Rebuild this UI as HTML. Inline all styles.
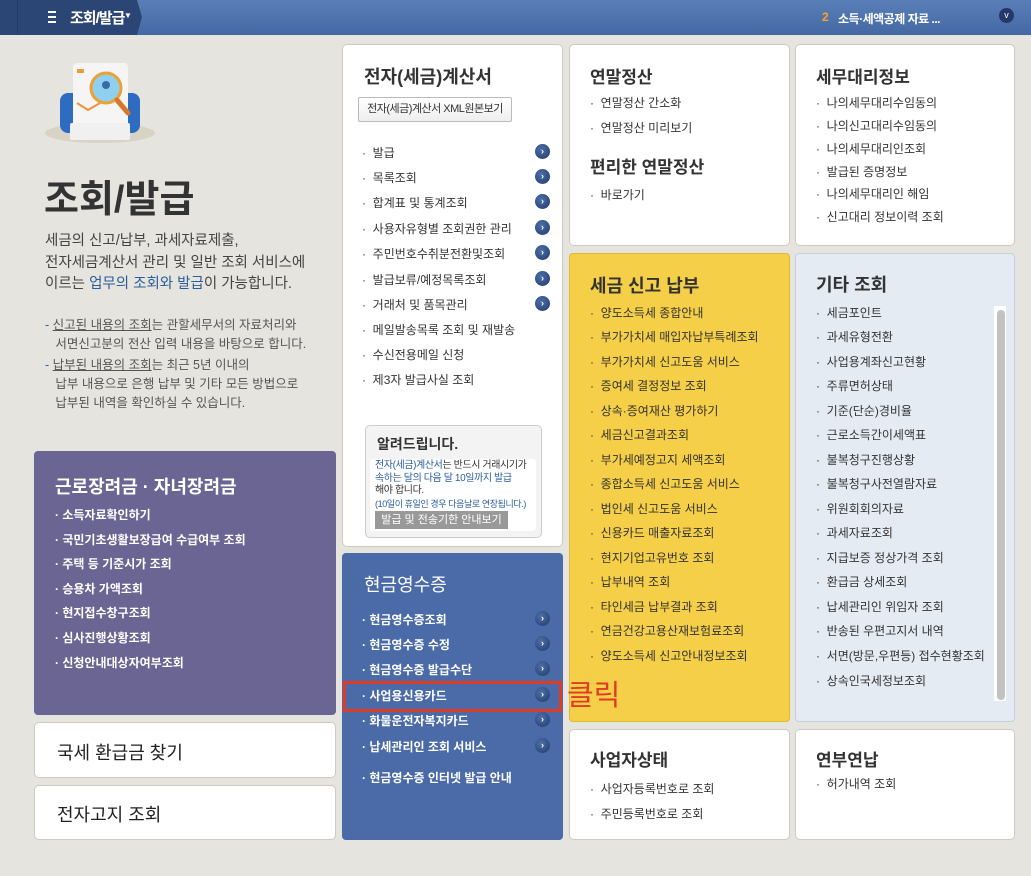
<!DOCTYPE html>
<html><head><meta charset="utf-8"><style>
*{margin:0;padding:0;box-sizing:border-box}
body{width:1031px;height:876px;background:#e6e4df;font-family:"Liberation Sans","Noto Sans CJK KR",sans-serif;position:relative;overflow:hidden;color:#333}
.a{position:absolute}
.hdr{left:0;top:0;width:1031px;height:35px;background:linear-gradient(#5a7fb8,#4468a3)}
.hl{left:0;top:0;width:137px;height:35px;background:#2b4674}
.box{position:absolute;background:#fff;border:1px solid #cfcac0;border-radius:5px}
.t{position:absolute;white-space:nowrap}
.li{position:absolute;white-space:nowrap;font-size:12px;color:#333}
.ar{position:absolute;width:15px;height:15px;border-radius:50%;background:radial-gradient(circle at 40% 35%,#4d6fa8,#1f3a6a);color:#fff;font-size:9px;line-height:15px;text-align:center;font-weight:bold}
.w{color:#fff;font-weight:bold}
</style></head><body>
<div class="a hdr"></div>
<div class="a hl"></div>
<svg class="a" style="left:130px;top:0" width="12" height="35"><polygon points="0,0 7,0 12,17 7,35 0,35" fill="#2b4674"/></svg>
<div class="a" style="left:17px;top:0;width:1px;height:35px;background:#223a62"></div>
<svg class="a" style="left:48px;top:11px" width="10" height="13"><rect y="0" width="8" height="2" fill="#fff"/><rect y="5" width="8" height="2" fill="#fff"/><rect y="10" width="8" height="2" fill="#fff"/></svg>
<div class="t" style="left:70px;top:7px;color:#fff;font-size:15px;font-weight:bold;letter-spacing:-1px">조회/발급</div>
<div class="t" style="left:124px;top:11px;color:#fff;font-size:8px">▼</div>
<div class="t" style="left:822px;top:10px;color:#f5a623;font-size:12px;font-weight:bold">2</div>
<div class="t" style="left:838px;top:10px;color:#fff;font-size:12px;font-weight:bold;letter-spacing:-0.5px">소득·세액공제 자료 ...</div>
<div class="a" style="left:999px;top:8px;width:15px;height:15px;border-radius:50%;background:#24386a;color:#fff;font-size:9px;text-align:center;line-height:15px">v</div>

<!-- icon -->
<svg class="a" style="left:40px;top:58px" width="120" height="90">
<ellipse cx="60" cy="75" rx="55" ry="10" fill="#cfc8b4" opacity=".6"/>
<rect x="20" y="35" width="80" height="40" rx="8" fill="#2d6cc0"/>
<rect x="33" y="5" width="55" height="65" rx="4" fill="#f5f5f5"/>
<rect x="37" y="11" width="7" height="4" fill="#f09a3a"/>
<circle cx="66" cy="30" r="15" fill="#8fd0f0" stroke="#f0a030" stroke-width="3"/>
<circle cx="66" cy="27" r="4" fill="#3a6aa8"/>
<line x1="77" y1="42" x2="88" y2="55" stroke="#d8772a" stroke-width="5" stroke-linecap="round"/>
<polyline points="37,45 48,52 60,45" stroke="#f0903a" stroke-width="2" fill="none"/>
<rect x="30" y="65" width="60" height="17" rx="2" fill="#f0f0f0"/>
</svg>
<div class="t" style="left:44px;top:168px;font-size:38px;font-weight:bold;color:#333">조회/발급</div>
<div class="t" style="left:45px;top:231px;font-size:14.5px;line-height:21.5px;color:#444">세금의 신고/납부, 과세자료제출,<br>전자세금계산서 관리 및 일반 조회 서비스에<br>이르는 <span style="color:#2a5d9a">업무의 조회와 발급</span>이 가능합니다.</div>
<div class="t" style="left:45px;top:316px;font-size:12.5px;line-height:19px;color:#555"><span style="color:#2a5d9a">-</span> <u>신고된 내용의 조회</u>는 관할세무서의 자료처리와<br>&nbsp;&nbsp;&nbsp;서면신고분의 전산 입력 내용을 바탕으로 합니다.</div>
<div class="t" style="left:45px;top:356px;font-size:12.5px;line-height:19px;color:#555"><span style="color:#2a5d9a">-</span> <u>납부된 내용의 조회</u>는 최근 5년 이내의<br>&nbsp;&nbsp;&nbsp;납부 내용으로 은행 납부 및 기타 모든 방법으로<br>&nbsp;&nbsp;&nbsp;납부된 내역을 확인하실 수 있습니다.</div>

<div class="a" style="left:34px;top:451px;width:302px;height:264px;background:#6b6593;border-radius:4px"></div>
<div class="t" style="left:55px;top:473px;font-size:18px;color:#fff;font-weight:bold">근로장려금 · 자녀장려금</div>
<div class="li w" style="left:55px;top:506px">· 소득자료확인하기</div>
<div class="li w" style="left:55px;top:531px">· 국민기초생활보장급여 수급여부 조회</div>
<div class="li w" style="left:55px;top:555px">· 주택 등 기준시가 조회</div>
<div class="li w" style="left:55px;top:580px">· 승용차 가액조회</div>
<div class="li w" style="left:55px;top:604px">· 현지접수창구조회</div>
<div class="li w" style="left:55px;top:629px">· 심사진행상황조회</div>
<div class="li w" style="left:55px;top:654px">· 신청안내대상자여부조회</div>

<div class="box" style="left:34px;top:722px;width:302px;height:56px"></div>
<div class="t" style="left:57px;top:739px;font-size:18px;color:#222">국세 환급금 찾기</div>
<div class="box" style="left:34px;top:785px;width:302px;height:55px"></div>
<div class="t" style="left:57px;top:801px;font-size:18px;color:#222">전자고지 조회</div>

<!-- col2 -->
<div class="box" style="left:342px;top:44px;width:221px;height:503px"></div>
<div class="t" style="left:364px;top:63px;font-size:18px;font-weight:bold;color:#333">전자(세금)계산서</div>
<div class="a" style="left:358px;top:97px;width:154px;height:25px;border:1px solid #bbb;border-radius:2px;background:linear-gradient(#fff,#eee);font-size:11px;text-align:center;line-height:23px;letter-spacing:-0.5px">전자(세금)계산서 XML원본보기</div>
<div class="li" style="left:362px;top:144px">·&nbsp; 발급</div><div class="ar" style="left:535px;top:144px">›</div>
<div class="li" style="left:362px;top:169px">·&nbsp; 목록조회</div><div class="ar" style="left:535px;top:169px">›</div>
<div class="li" style="left:362px;top:194px">·&nbsp; 합계표 및 통계조회</div><div class="ar" style="left:535px;top:194px">›</div>
<div class="li" style="left:362px;top:220px">·&nbsp; 사용자유형별 조회권한 관리</div><div class="ar" style="left:535px;top:220px">›</div>
<div class="li" style="left:362px;top:245px">·&nbsp; 주민번호수취분전환및조회</div><div class="ar" style="left:535px;top:245px">›</div>
<div class="li" style="left:362px;top:271px">·&nbsp; 발급보류/예정목록조회</div><div class="ar" style="left:535px;top:271px">›</div>
<div class="li" style="left:362px;top:296px">·&nbsp; 거래처 및 품목관리</div><div class="ar" style="left:535px;top:296px">›</div>
<div class="li" style="left:362px;top:321px">·&nbsp; 메일발송목록 조회 및 재발송</div>
<div class="li" style="left:362px;top:346px">·&nbsp; 수신전용메일 신청</div>
<div class="li" style="left:362px;top:371px">·&nbsp; 제3자 발급사실 조회</div>
<div class="a" style="left:365px;top:425px;width:177px;height:113px;border:1px solid #ccc;border-radius:5px;background:#f3f3f3"></div>
<div class="t" style="left:377px;top:434px;font-size:14px;font-weight:bold;color:#333">알려드립니다.</div>
<div class="a" style="left:370px;top:459px;width:166px;height:72px;background:#fff;border-radius:3px"></div>
<div class="t" style="left:375px;top:460px;font-size:10px;line-height:12.5px;color:#333;letter-spacing:-0.4px"><span style="color:#2a5d9a">전자(세금)계산서</span>는 반드시 거래시기가<br><span style="color:#2a5d9a">속하는 달의 다음 달 10일까지 발급</span><br>해야 합니다.<br><span style="color:#2a5d9a;font-size:9px">(10일이 휴일인 경우 다음날로 연장됩니다.)</span></div>
<div class="a" style="left:375px;top:511px;width:133px;height:18px;background:#999;color:#fff;font-size:11px;text-align:center;line-height:18px">발급 및 전송기한 안내보기</div>

<div class="a" style="left:342px;top:553px;width:221px;height:287px;background:#4a6aa8;border-radius:4px"></div>
<div class="t" style="left:364px;top:571px;font-size:18px;color:#fff">현금영수증</div>
<div class="li w" style="left:362px;top:611px">· 현금영수증조회</div><div class="ar" style="left:535px;top:611px">›</div>
<div class="li w" style="left:362px;top:636px">· 현금영수증 수정</div><div class="ar" style="left:535px;top:636px">›</div>
<div class="li w" style="left:362px;top:661px">· 현금영수증 발급수단</div><div class="ar" style="left:535px;top:661px">›</div>
<div class="li w" style="left:362px;top:687px">· 사업용신용카드</div><div class="ar" style="left:535px;top:687px">›</div>
<div class="li w" style="left:362px;top:712px">· 화물운전자복지카드</div><div class="ar" style="left:535px;top:712px">›</div>
<div class="li w" style="left:362px;top:738px">· 납세관리인 조회 서비스</div><div class="ar" style="left:535px;top:738px">›</div>
<div class="li w" style="left:362px;top:769px">· 현금영수증 인터넷 발급 안내</div>
<div class="a" style="left:343px;top:681px;width:219px;height:31px;border:3px solid #e03b26"></div>

<!-- col3 -->
<div class="box" style="left:569px;top:44px;width:221px;height:202px"></div>
<div class="t" style="left:590px;top:63px;font-size:17px;font-weight:bold;color:#333">연말정산</div>
<div class="li" style="left:590px;top:94px">·&nbsp; 연말정산 간소화</div>
<div class="li" style="left:590px;top:119px">·&nbsp; 연말정산 미리보기</div>
<div class="t" style="left:590px;top:153px;font-size:17px;font-weight:bold;color:#333">편리한 연말정산</div>
<div class="li" style="left:590px;top:186px">·&nbsp; 바로가기</div>

<div class="a" style="left:569px;top:253px;width:221px;height:469px;background:#f5cf47;border:1px solid #e0b830;border-radius:4px"></div>
<div class="t" style="left:590px;top:272px;font-size:18px;font-weight:bold;color:#333">세금 신고 납부</div>
<div class="li" style="left:590px;top:304px">·&nbsp; 양도소득세 종합안내</div>
<div class="li" style="left:590px;top:328px">·&nbsp; 부가가치세 매입자납부특례조회</div>
<div class="li" style="left:590px;top:353px">·&nbsp; 부가가치세 신고도움 서비스</div>
<div class="li" style="left:590px;top:377px">·&nbsp; 증여세 결정정보 조회</div>
<div class="li" style="left:590px;top:402px">·&nbsp; 상속·증여재산 평가하기</div>
<div class="li" style="left:590px;top:426px">·&nbsp; 세금신고결과조회</div>
<div class="li" style="left:590px;top:451px">·&nbsp; 부가세예정고지 세액조회</div>
<div class="li" style="left:590px;top:475px">·&nbsp; 종합소득세 신고도움 서비스</div>
<div class="li" style="left:590px;top:500px">·&nbsp; 법인세 신고도움 서비스</div>
<div class="li" style="left:590px;top:524px">·&nbsp; 신용카드 매출자료조회</div>
<div class="li" style="left:590px;top:549px">·&nbsp; 현지기업고유번호 조회</div>
<div class="li" style="left:590px;top:573px">·&nbsp; 납부내역 조회</div>
<div class="li" style="left:590px;top:598px">·&nbsp; 타인세금 납부결과 조회</div>
<div class="li" style="left:590px;top:622px">·&nbsp; 연금건강고용산재보험료조회</div>
<div class="li" style="left:590px;top:647px">·&nbsp; 양도소득세 신고안내정보조회</div>
<div class="t" style="left:567px;top:672px;font-size:29px;color:#e03b26;z-index:5">클릭</div>

<div class="box" style="left:569px;top:729px;width:221px;height:111px"></div>
<div class="t" style="left:590px;top:746px;font-size:17px;font-weight:bold;color:#333">사업자상태</div>
<div class="li" style="left:590px;top:780px">·&nbsp; 사업자등록번호로 조회</div>
<div class="li" style="left:590px;top:805px">·&nbsp; 주민등록번호로 조회</div>

<!-- col4 -->
<div class="box" style="left:795px;top:44px;width:220px;height:202px"></div>
<div class="t" style="left:816px;top:63px;font-size:17px;font-weight:bold;color:#333">세무대리정보</div>
<div class="li" style="left:816px;top:94px">·&nbsp; 나의세무대리수임동의</div>
<div class="li" style="left:816px;top:117px">·&nbsp; 나의신고대리수임동의</div>
<div class="li" style="left:816px;top:140px">·&nbsp; 나의세무대리인조회</div>
<div class="li" style="left:816px;top:163px">·&nbsp; 발급된 증명정보</div>
<div class="li" style="left:816px;top:185px">·&nbsp; 나의세무대리인 해임</div>
<div class="li" style="left:816px;top:208px">·&nbsp; 신고대리 정보이력 조회</div>

<div class="a" style="left:795px;top:253px;width:220px;height:469px;background:#e4ebf3;border:1px solid #c5d0dc;border-radius:4px"></div>
<div class="t" style="left:816px;top:271px;font-size:18px;font-weight:bold;color:#333">기타 조회</div>
<div class="a" style="left:994px;top:306px;width:12px;height:395px;background:#fff"></div>
<div class="a" style="left:997px;top:310px;width:8px;height:390px;background:#c2c2c2;border-radius:4px"></div>
<div class="li" style="left:816px;top:304px">·&nbsp; 세금포인트</div>
<div class="li" style="left:816px;top:328px">·&nbsp; 과세유형전환</div>
<div class="li" style="left:816px;top:353px">·&nbsp; 사업용계좌신고현황</div>
<div class="li" style="left:816px;top:377px">·&nbsp; 주류면허상태</div>
<div class="li" style="left:816px;top:402px">·&nbsp; 기준(단순)경비율</div>
<div class="li" style="left:816px;top:426px">·&nbsp; 근로소득간이세액표</div>
<div class="li" style="left:816px;top:451px">·&nbsp; 불복청구진행상황</div>
<div class="li" style="left:816px;top:475px">·&nbsp; 불복청구사전열람자료</div>
<div class="li" style="left:816px;top:500px">·&nbsp; 위원회회의자료</div>
<div class="li" style="left:816px;top:524px">·&nbsp; 과세자료조회</div>
<div class="li" style="left:816px;top:549px">·&nbsp; 지급보증 정상가격 조회</div>
<div class="li" style="left:816px;top:573px">·&nbsp; 환급금 상세조회</div>
<div class="li" style="left:816px;top:598px">·&nbsp; 납세관리인 위임자 조회</div>
<div class="li" style="left:816px;top:622px">·&nbsp; 반송된 우편고지서 내역</div>
<div class="li" style="left:816px;top:647px">·&nbsp; 서면(방문,우편등) 접수현황조회</div>
<div class="li" style="left:816px;top:672px">·&nbsp; 상속인국세정보조회</div>

<div class="box" style="left:795px;top:729px;width:220px;height:111px"></div>
<div class="t" style="left:816px;top:746px;font-size:17px;font-weight:bold;color:#333">연부연납</div>
<div class="li" style="left:816px;top:775px">·&nbsp; 허가내역 조회</div>
</body></html>
